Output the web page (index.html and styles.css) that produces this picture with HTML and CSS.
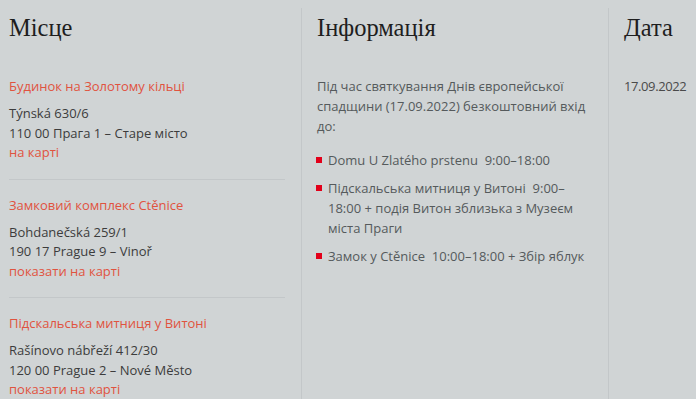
FILE: index.html
```html
<!DOCTYPE html>
<html lang="uk">
<head>
<meta charset="utf-8">
<title>Місце</title>
<link rel="stylesheet" href="styles.css">
</head>
<body>
<div class="table">
  <div class="col col-place">
    <h2 class="head">Місце</h2>
    <div class="place">
      <a class="link title" href="#">Будинок на Золотому кільці</a>
      <div class="addr">
        <div>Týnská 630/6</div>
        <div>110 00 Прага 1 – Старе місто</div>
        <a class="link" href="#">на карті</a>
      </div>
    </div>
    <div class="place">
      <a class="link title" href="#">Замковий комплекс Ctěnice</a>
      <div class="addr">
        <div>Bohdanečská 259/1</div>
        <div>190 17 Prague 9 – Vinoř</div>
        <a class="link" href="#">показати на карті</a>
      </div>
    </div>
    <div class="place">
      <a class="link title" href="#">Підскальська митниця у Витоні</a>
      <div class="addr">
        <div>Rašínovo nábřeží 412/30</div>
        <div>120 00 Prague 2 – Nové Město</div>
        <a class="link" href="#">показати на карті</a>
      </div>
    </div>
  </div>
  <div class="col col-info">
    <h2 class="head">Інформація</h2>
    <p class="text">Під час святкування Днів європейської спадщини (17.09.2022) безкоштовний вхід до:</p>
    <ul class="list">
      <li>Domu U Zlatého prstenu&nbsp; 9:00–18:00</li>
      <li>Підскальська митниця у Витоні&nbsp; 9:00–18:00 + подія Витон зблизька з Музеєм міста Праги</li>
      <li>Замок у Ctěnice&nbsp; 10:00–18:00 + Збір яблук</li>
    </ul>
  </div>
  <div class="col col-date">
    <h2 class="head">Дата</h2>
    <div class="text date">17.09.2022</div>
  </div>
</div>
</body>
</html>
```

FILE: styles.css
```css
html, body {
  margin: 0;
  padding: 0;
  background: #d0d4d5;
}
body {
  font-family: "Open Sans", "Liberation Sans", sans-serif;
  font-size: 13px;
  line-height: 20px;
  color: #3c3c3c;
}
.table {
  display: flex;
  padding: 8px 0 0 9px;
  min-height: 391px;
}
.col {
  padding-top: 5px;
}
.col-place {
  width: 276px;
  padding-right: 16px;
}
.col-info {
  width: 275px;
  padding-left: 15px;
  padding-right: 16px;
  border-left: 1px solid #c3c7c9;
}
.col-date {
  flex: 1;
  padding-left: 15px;
  border-left: 1px solid #c3c7c9;
}
.head {
  margin: 0 0 33px;
  font-family: "Liberation Serif", "DejaVu Serif", serif;
  font-weight: normal;
  font-size: 24.5px;
  line-height: 30px;
  color: #1e1e1e;
}
.link {
  color: #e0533f;
  text-decoration: none;
  display: block;
}
.place {
  padding-bottom: 16px;
  border-bottom: 1px solid #c3c7c9;
  margin-bottom: 15px;
}
.title {
  margin-bottom: 8px;
}
.addr {
  line-height: 19.5px;
}
.text {
  margin: 0;
  color: #555a5c;
}
p.text {
  margin-bottom: 14px;
}
.date {
  color: #4a4a4a;
  letter-spacing: -0.4px;
}
.list {
  list-style: none;
  margin: 0;
  padding: 0;
  color: #555a5c;
}
.list li {
  position: relative;
  padding-left: 11px;
  margin-bottom: 8px;
}
.list li::before {
  content: "";
  position: absolute;
  left: -1px;
  top: 7px;
  width: 6px;
  height: 6px;
  background: #e2001a;
}
```
